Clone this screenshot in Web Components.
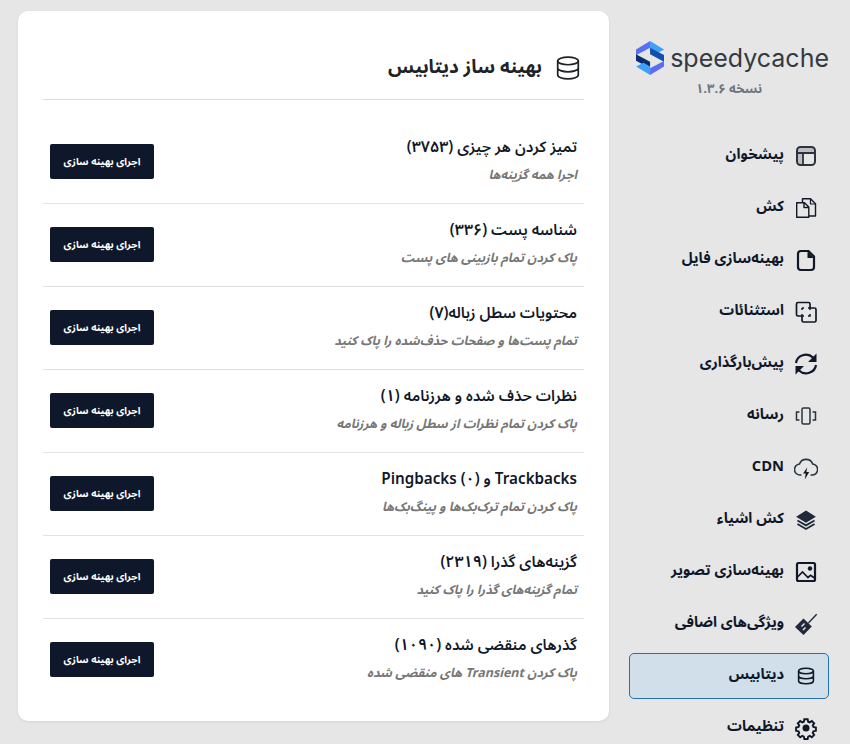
<!DOCTYPE html>
<html lang="fa" dir="rtl">
<head>
<meta charset="utf-8">
<style>
  html, body { margin: 0; height: 744px; overflow: hidden; background: #e6e6e6; }
  body { font-family: "Noto Sans", "DejaVu Sans", sans-serif; }
  sc-page { --fa: "Noto Sans Arabic", "Vazirmatn", "DejaVu Sans", sans-serif; font-family: Inter, "DejaVu Sans", sans-serif; }
</style>
</head>
<body>
<sc-page>
  <sc-sidebar slot="side">
    <sc-nav-item icon="layout">پیشخوان</sc-nav-item>
    <sc-nav-item icon="copy">کش</sc-nav-item>
    <sc-nav-item icon="file">بهینه‌سازی فایل</sc-nav-item>
    <sc-nav-item icon="exclude">استثنائات</sc-nav-item>
    <sc-nav-item icon="sync">پیش‌بارگذاری</sc-nav-item>
    <sc-nav-item icon="media">رسانه</sc-nav-item>
    <sc-nav-item icon="cloud">CDN</sc-nav-item>
    <sc-nav-item icon="layers">کش اشیاء</sc-nav-item>
    <sc-nav-item icon="image">بهینه‌سازی تصویر</sc-nav-item>
    <sc-nav-item icon="brush">ویژگی‌های اضافی</sc-nav-item>
    <sc-nav-item icon="dbs" active>دیتابیس</sc-nav-item>
    <sc-nav-item icon="gear">تنظیمات</sc-nav-item>
  </sc-sidebar>
  <sc-card slot="main">
    <sc-opt-row title="تمیز کردن هر چیزی (۳۷۵۳)" sub="اجرا همه گزینه‌ها"></sc-opt-row>
    <sc-opt-row title="شناسه پست (۳۳۶)" sub="پاک کردن تمام بازبینی های پست"></sc-opt-row>
    <sc-opt-row title="محتویات سطل زباله(۷)" sub="تمام پست‌ها و صفحات حذف‌شده را پاک کنید"></sc-opt-row>
    <sc-opt-row title="نظرات حذف شده و هرزنامه (۱)" sub="پاک کردن تمام نظرات از سطل زباله و هرزنامه"></sc-opt-row>
    <sc-opt-row title="Trackbacks و Pingbacks (۰)" sub="پاک کردن تمام ترک‌بک‌ها و پینگ‌بک‌ها"></sc-opt-row>
    <sc-opt-row title="گزینه‌های گذرا (۲۳۱۹)" sub="تمام گزینه‌های گذرا را پاک کنید"></sc-opt-row>
    <sc-opt-row title="گذرهای منقضی شده (۱۰۹۰)" sub="پاک کردن Transient های منقضی شده" last></sc-opt-row>
  </sc-card>
</sc-page>
<script>
const DB = '<ellipse cx="12" cy="5.500" rx="9.500" ry="3.500" fill="none" stroke="currentColor" stroke-width="1.600"/><path d="M2.500 5.500v13c0 1.900 4.300 3.500 9.500 3.500s9.500-1.600 9.500-3.500v-13M2.500 12c0 1.900 4.300 3.500 9.500 3.500s9.500-1.600 9.500-3.500" fill="none" stroke="currentColor" stroke-width="1.600"/>';
const ICONS = {
  layout: '<path d="M3 9V6a3 3 0 0 1 3-3h12a3 3 0 0 1 3 3v3zM3 9h6v12H6a3 3 0 0 1-3-3z" fill="#bdbdbd"/><rect x="3" y="3" width="18" height="18" rx="3.500" fill="none" stroke="#2b3340" stroke-width="2"/><path d="M3 9h18M9 9v12" fill="none" stroke="#2b3340" stroke-width="1.800"/>',
  copy: '<path d="M2.700 6.700h7.800l4.300 4.300v10.300H2.700zM10 7v4.500h4.500" fill="none" stroke="currentColor" stroke-width="1.400" stroke-linejoin="round"/><path d="M8.500 6V2.700h8l5 5V20H15" fill="none" stroke="currentColor" stroke-width="1.400" stroke-linejoin="round"/><path d="M16.500 3v5h5" fill="none" stroke="currentColor" stroke-width="1.200"/>',
  file: '<path d="M7 3h7.500L20 8.500V19a3 3 0 0 1-3 3H7a3 3 0 0 1-3-3V6a3 3 0 0 1 3-3z" fill="none" stroke="currentColor" stroke-width="2.200"/><path d="M13.500 3v7H20z" fill="currentColor"/>',
  exclude: '<path d="M8 16H4a1.500 1.500 0 0 1-1.500-1.500V4A1.500 1.500 0 0 1 4 2.500h10.500A1.500 1.500 0 0 1 16 4v4" fill="none" stroke="currentColor" stroke-width="1.700"/><path d="M16 8h4.500A1.500 1.500 0 0 1 22 9.500v11a1.500 1.500 0 0 1-1.500 1.500h-11A1.500 1.500 0 0 1 8 20.500V16" fill="none" stroke="currentColor" stroke-width="1.700"/><path d="M8 8h2M8 8v2M14 8h2v2M8 14v2h2M14 16h2v-2" fill="none" stroke="currentColor" stroke-width="1.500"/>',
  sync: '<path d="M2 11A10 9.500 0 0 1 19 5.500L21 7.500M22 13A10 9.500 0 0 1 5 18.500L3 16.500" fill="none" stroke="currentColor" stroke-width="2.200"/><path d="M22.500 1.500V10H14zM1.500 22.500V14H10z" fill="currentColor"/>',
  media: '<rect x="8" y="4" width="8" height="16" rx="1.500" fill="none" stroke="#2b3340" stroke-width="1.500"/><path d="M5.500 8h-3v8h3M18.500 8h3v8h-3" fill="none" stroke="#2b3340" stroke-width="1.500"/>',
  cloud: '<path d="M7.500 19H6.500A5.500 5.500 0 0 1 5.500 8 7 7 0 0 1 18.700 8 5.500 5.500 0 0 1 17.500 19H16.500" fill="none" stroke="#2b3340" stroke-width="1.600"/><path d="M13.200 11.500 9 17.500h2.700l-.9 6 4.400-7.500h-2.800z" fill="#111827"/>',
  layers: '<g transform="translate(12 12) scale(.9) translate(-12 -12)"><path d="M12 1.500 23 8.500 12 15 1 8.500z" fill="#1f2937"/><path d="M2.500 12.500 12 18l9.500-5.500M2.500 16.500 12 22l9.500-5.500" fill="none" stroke="#1f2937" stroke-width="2"/></g>',
  image: '<rect x="3" y="3" width="18" height="18" rx="1.500" fill="none" stroke="currentColor" stroke-width="2.200"/><circle cx="16" cy="8.500" r="2.200" fill="currentColor"/><path d="M3 17.500 8.500 12 14 17.500l2.500-2.200 4.500 3" fill="none" stroke="currentColor" stroke-width="1.700"/>',
  brush: '<path d="M14 10.500 22.200 1.800l1 1-8.300 8.800z" fill="#1f2937"/><path d="M9.500 6.500 17.800 14.500 9.500 23 1 15z" fill="#1f2937"/><path d="M7.500 14.500l3-3M9 18l2.500-2.500" stroke="#e6e6e6" stroke-width="1.500"/>',
  db: DB,
  dbs: '<g transform="translate(12 12) scale(.78) translate(-12 -12)">' + DB.replace(/stroke-width="1.600"/g, 'stroke-width="2"') + '</g>',
  gear: '<path d="M10 1.500h4l.6 3 1.900.8 2.500-1.700 2.800 2.800-1.700 2.500.8 1.900 3 .6v4l-3 .6-.8 1.900 1.700 2.500-2.800 2.800-2.500-1.700-1.900.8-.6 3h-4l-.6-3-1.900-.8-2.500 1.700-2.800-2.800 1.700-2.500-.8-1.900-3-.6v-4l3-.6.8-1.900-1.700-2.500 2.800-2.800 2.500 1.700 1.900-.8z" transform="translate(2 2) scale(.833)" fill="none" stroke="currentColor" stroke-width="2.300"/><circle cx="12" cy="12" r="3.500" fill="currentColor"/>'
};

class ScPage extends HTMLElement {
  constructor() {
    super();
    this.attachShadow({ mode: 'open' });
    this.shadowRoot.innerHTML = `
      <style>
        :host { display: grid; grid-template-columns: 200px 591px; gap: 20px; padding: 11px 21px 0 18px; justify-content: start; direction: rtl; }
      </style>
      <slot name="side"></slot>
      <slot name="main"></slot>
    `;
  }
}
customElements.define('sc-page', ScPage);

class ScSidebar extends HTMLElement {
  constructor() {
    super();
    this.attachShadow({ mode: 'open' });
    this.shadowRoot.innerHTML = `
      <style>
        :host { display: block; }
        .logo { display: flex; direction: ltr; align-items: center; gap: 6px; margin: 29px 0 0; padding-left: 7px; height: 36px; }
        .name { font: 400 25px Inter, "Liberation Sans", sans-serif; color: #333a42; white-space: nowrap; }
        .ver { text-align: center; font: 700 13px/20px var(--fa); color: #6f7680; margin: 3px 0 0; }
        nav { display: flex; flex-direction: column; gap: 6px; margin-top: 34px; }
      </style>
      <div class="logo">
        <svg width="30" height="36" viewBox="0 0 30 36">
          <path d="M15 0 0 9v6L15 7z" fill="#5b6cf5"/>
          <path d="M15 0 30 9l-8 4-7-4z" fill="#3fa0f7"/>
          <path d="M0 14 15 22v7L0 21z" fill="#0b2d6e"/>
          <path d="M15 7 30 15v7L15 14z" fill="#0f4fb0"/>
          <path d="M0 27l8-4 7 4v9z" fill="#3fa0f7"/>
          <path d="M15 36 30 27v-6L15 29z" fill="#5b6cf5"/>
        </svg>
        <span class="name">speedycache</span>
      </div>
      <div class="ver">نسخه ۱.۳.۶</div>
      <nav><slot></slot></nav>
    `;
  }
}
customElements.define('sc-sidebar', ScSidebar);

class ScNavItem extends HTMLElement {
  constructor() {
    super();
    this.attachShadow({ mode: 'open' });
    const on = this.hasAttribute('active');
    this.shadowRoot.innerHTML = `
      <style>
        :host { display: block; }
        a { display: flex; align-items: center; gap: 10px; height: 46px; box-sizing: border-box; padding: 0 10px 0 0; border: 1px solid transparent; border-radius: 5px; color: #0f172a; font: 700 14.700px/22px var(--fa); }
        a.on { background: #d0dfe9; border-color: #2271b1; }
        svg { width: 24px; height: 24px; flex: none; color: #111827; }
        span { transform: translateY(-1px); }
      </style>
      <a class="${on ? 'on' : ''}"><svg viewBox="0 0 24 24">${ICONS[this.getAttribute('icon')] || ''}</svg><span><slot></slot></span></a>
    `;
  }
}
customElements.define('sc-nav-item', ScNavItem);

class ScCard extends HTMLElement {
  constructor() {
    super();
    this.attachShadow({ mode: 'open' });
    this.shadowRoot.innerHTML = `
      <style>
        :host { display: block; background: #fff; border-radius: 10px; height: 710px; box-sizing: border-box; padding: 35px 25px 0; box-shadow: 0 1px 3px rgba(0,0,0,.08); }
        h2 { display: flex; align-items: center; gap: 13px; margin: 0; height: 54px; padding: 0 3px 12px 0; box-sizing: border-box; border-bottom: 1px solid #dcdcdc; font: 700 18.800px/26px var(--fa); color: #1d2327; }
        svg { width: 26px; height: 26px; transform: translateY(1px); }
        .rows { margin-top: 21px; }
      </style>
      <h2><svg viewBox="0 0 24 24">${ICONS.db}</svg>بهینه ساز دیتابیس</h2>
      <div class="rows"><slot></slot></div>
    `;
  }
}
customElements.define('sc-card', ScCard);

class ScOptRow extends HTMLElement {
  constructor() {
    super();
    this.attachShadow({ mode: 'open' });
    const last = this.hasAttribute('last');
    // the reference's digits are wider than the fallback font's
    const title = this.getAttribute('title').replace(/[۰-۹]+/g, '<b>$&</b>');
    this.shadowRoot.innerHTML = `
      <style>
        :host { display: flex; align-items: center; justify-content: space-between; height: 83px; box-sizing: border-box; padding: 0 7px 2px; ${last ? '' : 'border-bottom: 1px solid #e2e2e2;'} }
        .title { font: 600 15.200px/20px var(--fa); color: #111827; transform: translateY(-1px); }
        .title b { font-weight: 600; font-size: 16px; letter-spacing: 2.500px; }
        .sub { font: italic 700 12.500px/20px var(--fa); color: #777; margin-top: 7px; }
        button { all: unset; width: 104px; height: 35px; background: #0f172a; color: #fff; border-radius: 2px; text-align: center; font: 700 10px/35px var(--fa); }
      </style>
      <div>
        <div class="title">${title}</div>
        <div class="sub">${this.getAttribute('sub')}</div>
      </div>
      <button>اجرای بهینه سازی</button>
    `;
  }
}
customElements.define('sc-opt-row', ScOptRow);
</script>
</body>
</html>
